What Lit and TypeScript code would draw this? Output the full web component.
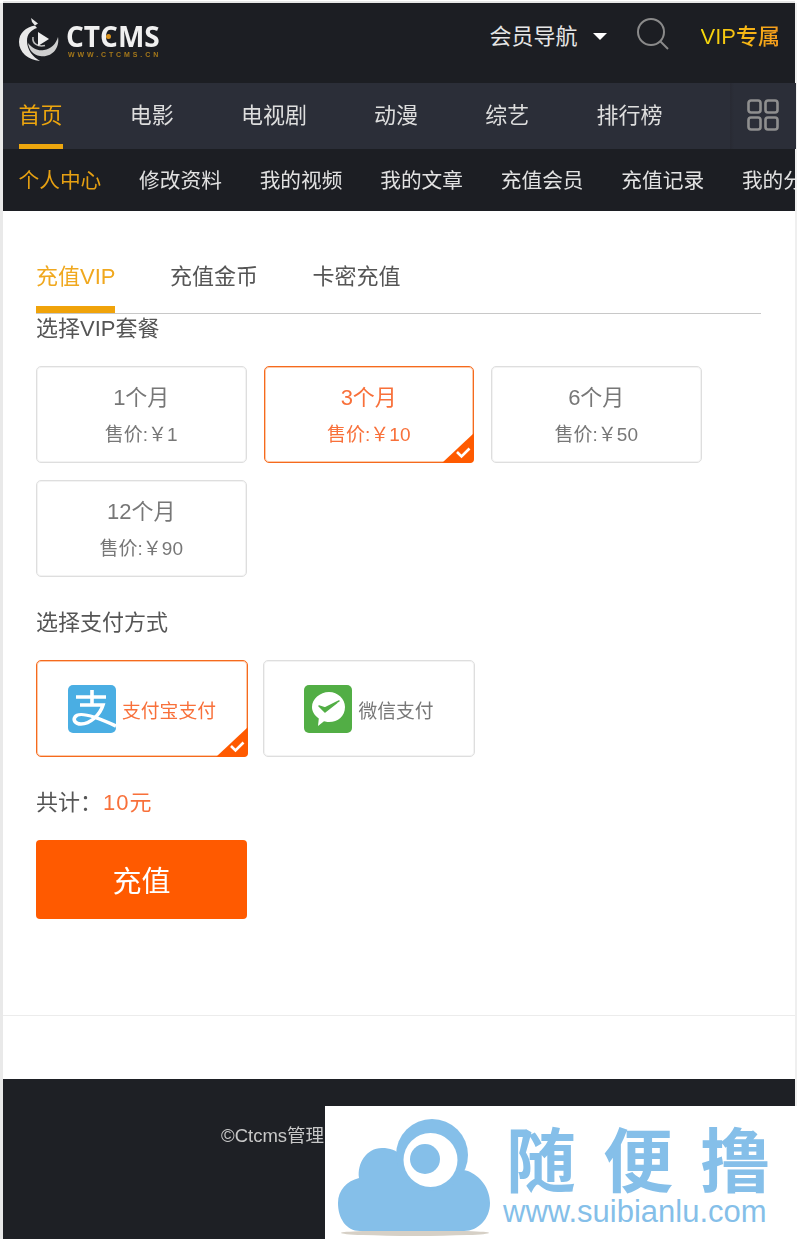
import { LitElement, css, html, svg } from "lit";
import { customElement } from "lit/decorators.js";
import { classMap } from "lit/directives/class-map.js";

const navItems = ["首页", "电影", "电视剧", "动漫", "综艺", "排行榜"];
const subItems = ["个人中心", "修改资料", "我的视频", "我的文章", "充值会员", "充值记录", "我的分享"];
const plans = [
  { name: "1个月", price: "1", on: false },
  { name: "3个月", price: "10", on: true },
  { name: "6个月", price: "50", on: false },
  { name: "12个月", price: "90", on: false },
];

const checkMark = html`<svg class="corner" width="32" height="30" viewBox="0 0 32 30">
  <path d="M32 0V26a4 4 0 0 1-4 4H0Z" fill="#ff5a00" />
  <path d="M15 19l4.500 4.500L27.500 15.500" fill="none" stroke="#fff" stroke-width="2.600" />
</svg>`;

const alipayIcon = svg`<svg width="48" height="48" viewBox="0 0 48 48">
  <rect width="48" height="48" rx="5" fill="#4aaee3" />
  <path d="M8 12H38M24 5V20M12 20H35C32 30 22 39 13 39C7 39 5 35 7 32C10 27 22 29 48 41" fill="none" stroke="#fff" stroke-width="3.600" />
</svg>`;

const wechatIcon = svg`<svg width="48" height="48" viewBox="0 0 48 48">
  <rect width="48" height="48" rx="5" fill="#52ae45" />
  <path d="M25 7C34 7 41 14 41 22C41 31 34 37 25 37C23 37 21.500 36.800 20 36.300L14 41L14.800 33.500C10.500 30.500 8 26.500 8 22C8 14 16 7 25 7Z" fill="#fff" />
  <path d="M15 21L21 27L35 16L21 23Z" fill="#52ae45" stroke="#52ae45" stroke-width="1.500" stroke-linejoin="round" />
</svg>`;

@customElement("app-root")
export class AppRoot extends LitElement {
  static styles = css`
    :host {
      display: block;
      position: relative;
      height: 1241px;
      overflow: hidden;
      background: #fff;
      font-family: "Liberation Sans", "Noto Sans CJK SC", sans-serif;
      color: #555;
    }

    .frame {
      display: flex;
      flex-direction: column;
      height: 1236px;
      margin: 3px 5px 0 3px;
      box-shadow: -3px 0 0 #e9e9e9, 2px 0 0 #efefef, 0 -2px 0 #e6e6e6;
      filter: blur(0.35px);
    }

    .top {
      display: flex;
      align-items: center;
      height: 80px;
      flex: none;
      padding: 0 15px;
      background: #1c1e23;
      box-sizing: border-box;
    }

    .logo {
      display: flex;
      align-items: center;
      gap: 3px;
      margin-top: -6px;
    }

    .logo-text {
      position: relative;
      display: flex;
      flex-direction: column;
      gap: 1px;
    }

    .logo-name {
      font: 700 28px/28px "Open Sans", "Liberation Sans", sans-serif;
      color: #f0f0f0;
    }

    .logo-dot {
      position: absolute;
      left: 40px;
      top: 12px;
      width: 5px;
      height: 5px;
      border-radius: 50%;
      background: #d9921c;
    }

    .logo-url {
      font: 700 7px/8px "Liberation Sans", sans-serif;
      color: #a5781a;
      letter-spacing: 2.900px;
      margin-left: 2px;
    }

    .spacer {
      flex: 1;
    }

    .member {
      font-size: 22px;
      line-height: 30px;
      color: #e6e6e6;
      margin-top: -12px;
    }

    .arrow {
      width: 0;
      height: 0;
      margin: -13px 0 0 15px;
      border-left: 7px solid transparent;
      border-right: 7px solid transparent;
      border-top: 7px solid #fff;
    }

    .search {
      margin: -18px 0 0 30px;
    }

    .vip {
      margin: -12px 0 0 32px;
      font-size: 22px;
      font-weight: 500;
      line-height: 30px;
      background: linear-gradient(90deg, #f6dc0a, #f59a1d);
      -webkit-background-clip: text;
      background-clip: text;
      color: transparent;
    }

    .nav {
      display: flex;
      height: 66px;
      flex: none;
      padding-left: 15.500px;
      gap: 67.200px;
      background: #2b2e38;
      box-sizing: border-box;
      color: #dedede;
      font-size: 22px;
    }

    .nav-item {
      line-height: 65px;
      border-bottom: 5px solid transparent;
      height: 61px;
      flex: none;
    }

    .nav-item.on {
      color: #eda60e;
      border-color: #eda60e;
    }

    .nav-grid {
      margin-left: auto;
      display: flex;
      align-items: center;
      padding: 0 17px 2px 17px;
      height: 64px;
      background: linear-gradient(90deg, #282a33 0, #2b2e38 4px);
    }

    .sub {
      display: flex;
      height: 62px;
      flex: none;
      padding-left: 15.500px;
      gap: 37.800px;
      overflow: hidden;
      background: #1c1e23;
      box-sizing: border-box;
      color: #e2e2e2;
      font-size: 20.700px;
      line-height: 64px;
      white-space: nowrap;
    }

    .sub-item {
      flex: none;
    }

    .sub-item.on {
      color: #e6a012;
    }

    .main {
      padding: 0 33px 96px;
      border-bottom: 1px solid #ececec;
      flex: none;
    }

    .tabs {
      display: flex;
      gap: 54.500px;
      margin-top: 30px;
      border-bottom: 1px solid #c8c8c8;
      width: 725px;
      font-size: 22px;
      line-height: 30px;
      color: #555;
    }

    .tab {
      padding: 21px 0 14px;
      border-bottom: 7px solid transparent;
    }

    .tab.on {
      color: #f0a81e;
      border-color: #f0a30a;
    }

    .label {
      font-size: 22px;
      line-height: 27px;
      padding-top: 1px;
      color: #555;
    }

    .plans {
      display: flex;
      flex-wrap: wrap;
      gap: 17px;
      margin: 24px 0 31px;
      width: 700px;
    }

    .card {
      position: relative;
      width: 210.500px;
      height: 97px;
      box-sizing: border-box;
      border: 1px solid #dedede;
      box-shadow: inset 0 0 0 1px #f3f3f3;
      border-radius: 5px;
      text-align: center;
      color: #777;
    }

    .card.on {
      border-color: #f56a1e;
      box-shadow: inset 0 0 0 1px #fdc9a8;
      color: #f8703a;
    }

    .card-name {
      font-size: 22px;
      line-height: 30px;
      margin-top: 16px;
    }

    .card-price {
      font-size: 19px;
      line-height: 28px;
      margin-top: 8px;
    }

    .corner {
      position: absolute;
      right: -1px;
      bottom: -1px;
    }

    .pays {
      display: flex;
      gap: 15px;
      margin: 24px 0 31px;
    }

    .pay {
      position: relative;
      display: flex;
      align-items: center;
      justify-content: center;
      gap: 6px;
      width: 212px;
      height: 97px;
      box-sizing: border-box;
      border: 1px solid #dedede;
      box-shadow: inset 0 0 0 1px #f3f3f3;
      border-radius: 5px;
      font-size: 18.800px;
      color: #777;
    }

    .pay.on {
      border-color: #f56a1e;
      box-shadow: inset 0 0 0 1px #fdc9a8;
      color: #f8703a;
    }

    .pay-name {
      line-height: 28px;
      margin-top: 7px;
    }

    .amount {
      color: #f8703a;
      margin-left: 1px;
      letter-spacing: 1px;
    }

    .pay-btn {
      display: block;
      width: 211px;
      height: 79px;
      margin-top: 24px;
      border: 0;
      border-radius: 4px;
      background: #ff5a00;
      color: #fff;
      font: 400 29px "Noto Sans CJK SC", sans-serif;
      padding: 0 0 2px;
    }

    .gap {
      height: 63px;
      flex: none;
    }

    .footer {
      flex: 1;
      padding: 43px 0 0 218px;
      background: #1e2025;
      color: #c8c8c8;
      font-size: 18.500px;
      line-height: 28px;
    }

    .mark {
      position: absolute;
      left: 325px;
      top: 1106px;
      width: 475px;
      height: 135px;
      background: #fff;
      display: flex;
      color: #85bfe9;
    }

    .mark-cloud {
      margin-left: 5px;
      flex: none;
    }

    .mark-text {
      margin-left: 8px;
      width: 290px;
    }

    .mark-name {
      display: flex;
      gap: 27px;
      margin: 13px 0 0 3px;
      font: 700 70px/76px "Noto Sans CJK SC", sans-serif;
    }

    .mark-url {
      font: 400 31px/32px "Liberation Sans", sans-serif;
      margin-top: 1px;
    }
  `;

  render() {
    return html`
      <div class="frame">
        <header class="top">
          <div class="logo">
            <svg width="45" height="46" viewBox="0 0 45 46">
              <path d="M13 1L20 6.500L17 8.500C8 10 1 16 1 25C1 35 10 43 22 44C15 40 9 33 9 24C9 17 13 13 19 11L14 5Z" fill="#e8e8e8" />
              <path d="M40 20C42 31 34 41 22 39C15 38 11 33 10 26C15 32 20 34 26 33C33 32 38 27 40 20Z" fill="#cfcfcf" />
              <path d="M15 20C14 27 20 30 27 28.500" fill="none" stroke="#bdbdbd" stroke-width="1.500" />
              <path d="M20 15L31 22L20 29Z" fill="#eee" />
            </svg>
            <div class="logo-text">
              <span class="logo-name">CTCMS</span>
              <span class="logo-dot"></span>
              <span class="logo-url">WWW.CTCMS.CN</span>
            </div>
          </div>
          <div class="spacer"></div>
          <span class="member">会员导航</span>
          <span class="arrow"></span>
          <svg class="search" width="32" height="32" viewBox="0 0 32 32" fill="none" stroke="#8a8a8a" stroke-width="2">
            <circle cx="14" cy="14" r="13" />
            <path d="M23.500 23.500L31 31" />
          </svg>
          <span class="vip">VIP专属</span>
        </header>

        <nav class="nav">
          ${navItems.map((n, i) => html`<span class=${classMap({ "nav-item": true, on: i === 0 })}>${n}</span>`)}
          <div class="nav-grid">
            <svg width="32" height="32" viewBox="0 0 32 32" fill="none" stroke="#8f8f8f" stroke-width="2.600">
              <rect x="1.500" y="1.500" width="12" height="12" rx="2.500" />
              <rect x="18.500" y="1.500" width="12" height="12" rx="2.500" />
              <rect x="1.500" y="18.500" width="12" height="12" rx="2.500" />
              <rect x="18.500" y="18.500" width="12" height="12" rx="2.500" />
            </svg>
          </div>
        </nav>

        <div class="sub">
          ${subItems.map((n, i) => html`<span class=${classMap({ "sub-item": true, on: i === 0 })}>${n}</span>`)}
        </div>

        <main class="main">
          <div class="tabs">
            <span class="tab on">充值VIP</span>
            <span class="tab">充值金币</span>
            <span class="tab">卡密充值</span>
          </div>
          <div class="label">选择VIP套餐</div>
          <div class="plans">
            ${plans.map(
              (p) => html`<div class=${classMap({ card: true, on: p.on })}>
                <div class="card-name">${p.name}</div>
                <div class="card-price">售价:￥${p.price}</div>
                ${p.on ? checkMark : ""}
              </div>`
            )}
          </div>
          <div class="label">选择支付方式</div>
          <div class="pays">
            <div class="pay on">${alipayIcon}<span class="pay-name">支付宝支付</span>${checkMark}</div>
            <div class="pay">${wechatIcon}<span class="pay-name">微信支付</span></div>
          </div>
          <div class="label">共计：<span class="amount">10元</span></div>
          <button class="pay-btn">充值</button>
        </main>

        <div class="gap"></div>
        <footer class="footer">©Ctcms管理系统</footer>
      </div>

      <div class="mark">
        <svg class="mark-cloud" width="165" height="132" viewBox="0 0 165 132">
          <ellipse cx="85" cy="127" rx="74" ry="3" fill="#d6d0c6" />
          <path d="M30 125C16 125 8 112 8 97C8 84 17 75 29 72C27 58 36 42 52 42C60 42 66 44 72 50L138 65C150 70 160 82 160 97C160 113 148 125 134 125Z" fill="#85bfe9" />
          <circle cx="102" cy="49" r="36" fill="#85bfe9" />
          <circle cx="100.500" cy="54" r="27" fill="#fff" />
          <circle cx="95" cy="53" r="15" fill="#85bfe9" />
        </svg>
        <div class="mark-text">
          <div class="mark-name"><span>随</span><span>便</span><span>撸</span></div>
          <div class="mark-url">www.suibianlu.com</div>
        </div>
      </div>
    `;
  }
}
